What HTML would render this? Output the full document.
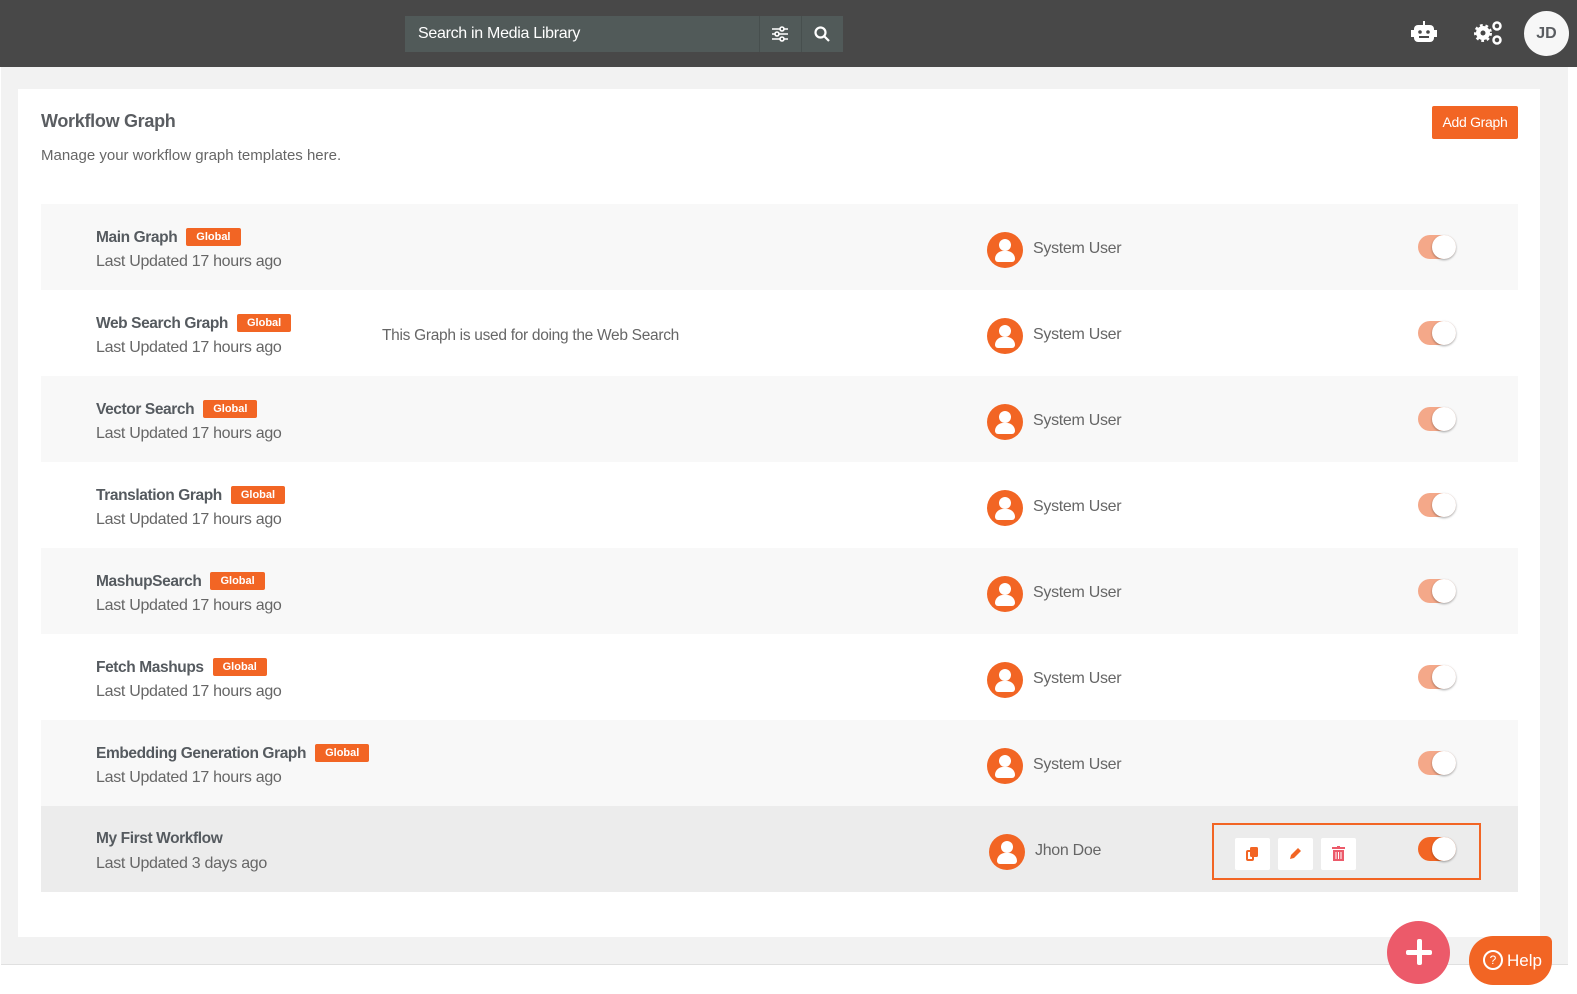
<!DOCTYPE html>
<html><head><meta charset="utf-8"><style>
*{box-sizing:border-box;margin:0;padding:0}
body{width:1577px;height:994px;background:#fff;font-family:"Liberation Sans",Arial,sans-serif;color:#5f6368;position:relative;overflow:hidden}
.top{position:absolute;left:0;top:0;width:1577px;height:67px;background:#484848}
.search{position:absolute;left:405px;top:16px;width:438px;height:36px;background:#515a59}
.search span{position:absolute;left:13px;top:9px;color:#fff;font-size:16px;letter-spacing:-0.3px}
.sep{position:absolute;top:0;width:1px;height:36px;background:#474f4e}
.main{position:absolute;left:1px;top:67px;width:1567px;height:898px;background:#f2f2f2;border-bottom:1px solid #e0e0e0}
.card{position:absolute;left:18px;top:89px;width:1522px;height:848px;background:#fff}
h1{position:absolute;left:41px;top:111px;font-size:18px;font-weight:bold;color:#5a5d61;letter-spacing:-0.3px}
.sub{position:absolute;left:41px;top:147px;font-size:15px;color:#666}
.add{position:absolute;left:1432px;top:106px;width:86px;height:33px;background:#f26524;color:#fff;font-size:14px;text-align:center;line-height:33px;border-radius:2px;letter-spacing:-0.3px}
.row{position:absolute;left:41px;width:1477px;height:86px}
.name{position:absolute;left:55px;top:24px;font-size:15.5px;font-weight:bold;color:#555a5f;letter-spacing:-0.4px}
.badge{display:inline-block;background:#f26524;color:#fff;font-size:11px;font-weight:bold;padding:3px 10px;border-radius:2px;margin-left:9px;vertical-align:2px;letter-spacing:0}
.upd{position:absolute;left:55px;top:49px;font-size:16px;color:#666;letter-spacing:-0.3px}
.desc{position:absolute;left:341px;top:37px;font-size:15.5px;color:#666;letter-spacing:-0.3px}
.av{position:absolute;left:946px;top:28px;width:36px;height:36px;border-radius:50%;background:#f26524;overflow:hidden}
.av::before{content:"";position:absolute;left:12px;top:7px;width:12px;height:12px;border-radius:50%;background:#fff}
.av::after{content:"";position:absolute;left:8px;top:19px;width:20px;height:11px;border-radius:8px 8px 3px 3px;background:#fff}
.user{position:absolute;left:992px;top:36px;font-size:16px;color:#666;letter-spacing:-0.3px}
.tog{position:absolute;left:1377px;top:31px;width:38px;height:24px;border-radius:12px;background:#f4a889}
.tog::after{content:"";position:absolute;right:0;top:0;width:24px;height:24px;border-radius:50%;background:#fff;box-shadow:0 1px 2px rgba(0,0,0,.35)}
.ib{position:absolute;top:13px;width:35px;height:32px;background:#fff;border-radius:2px}
</style></head><body>
<div class="top">
 <div class="search"><span>Search in Media Library</span>
  <div class="sep" style="left:354px"></div><div class="sep" style="left:396px"></div>
  <svg style="position:absolute;left:366px;top:9px" width="18" height="18" viewBox="0 0 18 18" fill="none" stroke="#fff" stroke-width="1.6"><path d="M1 4h16M1 9h16M1 14h16"/><circle cx="11" cy="4" r="2" fill="#515a59"/><circle cx="6" cy="9" r="2" fill="#515a59"/><circle cx="11" cy="14" r="2" fill="#515a59"/></svg>
  <svg style="position:absolute;left:408px;top:9px" width="18" height="18" viewBox="0 0 18 18" fill="none" stroke="#fff" stroke-width="2.2"><circle cx="7.5" cy="7.5" r="5"/><path d="M11 11l5 5"/></svg>
 </div>
 <svg style="position:absolute;left:1410px;top:20px" width="28" height="24" viewBox="0 0 28 24"><rect x="13" y="1" width="2" height="4" fill="#fff"/><rect x="4" y="5" width="20" height="17" rx="4" fill="#fff"/><rect x="1" y="10" width="3" height="7" fill="#fff"/><rect x="24" y="10" width="3" height="7" fill="#fff"/><circle cx="10" cy="12" r="1.8" fill="#484848"/><circle cx="18" cy="12" r="1.8" fill="#484848"/><rect x="9" y="16" width="10" height="2" fill="#484848"/></svg>
 <svg style="position:absolute;left:1473px;top:20px" width="30" height="26" viewBox="0 0 30 26"><circle cx="10" cy="13" r="7" fill="#fff" stroke="#fff" stroke-width="4" stroke-dasharray="2.5 2.5"/><circle cx="10" cy="13" r="2.5" fill="#484848"/><circle cx="24" cy="6" r="3.5" fill="none" stroke="#fff" stroke-width="2.5"/><circle cx="24" cy="20" r="3.5" fill="none" stroke="#fff" stroke-width="2.5"/></svg>
 <div style="position:absolute;left:1524px;top:11px;width:45px;height:45px;border-radius:50%;background:#f7f7f7;color:#5a5d61;font-weight:bold;font-size:16px;text-align:center;line-height:45px">JD</div>
</div>
<div class="main"></div>
<div class="card"></div>
<h1>Workflow Graph</h1>
<div class="sub">Manage your workflow graph templates here.</div>
<div class="add">Add Graph</div>

<div class="row" style="top:204px;background:#f8f8f8"><div class="name">Main Graph<span class="badge">Global</span></div><div class="upd">Last Updated 17 hours ago</div><div class="av"></div><div class="user">System User</div><div class="tog"></div></div>
<div class="row" style="top:290px"><div class="name">Web Search Graph<span class="badge">Global</span></div><div class="upd">Last Updated 17 hours ago</div><div class="desc">This Graph is used for doing the Web Search</div><div class="av"></div><div class="user">System User</div><div class="tog"></div></div>
<div class="row" style="top:376px;background:#f8f8f8"><div class="name">Vector Search<span class="badge">Global</span></div><div class="upd">Last Updated 17 hours ago</div><div class="av"></div><div class="user">System User</div><div class="tog"></div></div>
<div class="row" style="top:462px"><div class="name">Translation Graph<span class="badge">Global</span></div><div class="upd">Last Updated 17 hours ago</div><div class="av"></div><div class="user">System User</div><div class="tog"></div></div>
<div class="row" style="top:548px;background:#f8f8f8"><div class="name">MashupSearch<span class="badge">Global</span></div><div class="upd">Last Updated 17 hours ago</div><div class="av"></div><div class="user">System User</div><div class="tog"></div></div>
<div class="row" style="top:634px"><div class="name">Fetch Mashups<span class="badge">Global</span></div><div class="upd">Last Updated 17 hours ago</div><div class="av"></div><div class="user">System User</div><div class="tog"></div></div>
<div class="row" style="top:720px;background:#f8f8f8"><div class="name">Embedding Generation Graph<span class="badge">Global</span></div><div class="upd">Last Updated 17 hours ago</div><div class="av"></div><div class="user">System User</div><div class="tog"></div></div>
<div class="row" style="top:806px;background:#ececec"><div class="name">My First Workflow</div><div class="upd" style="top:49px">Last Updated 3 days ago</div><div class="av" style="left:948px;top:28px"></div><div class="user" style="left:994px;top:36px">Jhon Doe</div>
 <div style="position:absolute;left:1171px;top:17px;width:269px;height:57px;border:2px solid #f26524">
  <div class="ib" style="left:21px"><svg style="position:absolute;left:11px;top:9px" width="13" height="14" viewBox="0 0 13 14"><rect x="1" y="4" width="6" height="9" rx="1" fill="none" stroke="#f26524" stroke-width="2"/><rect x="4" y="0" width="8" height="10" rx="1.5" fill="#f26524"/></svg></div>
  <div class="ib" style="left:64px"><svg style="position:absolute;left:10px;top:8px" width="15" height="15" viewBox="0 0 15 15"><path d="M2 13l1-4 7-7 3 3-7 7z" fill="#f26524"/></svg></div>
  <div class="ib" style="left:107px"><svg style="position:absolute;left:11px;top:8px" width="13" height="15" viewBox="0 0 13 15"><rect x="0" y="1" width="13" height="2" fill="#ec5a6a"/><rect x="5" y="0" width="3" height="2" fill="#ec5a6a"/><path d="M1 4h11v11H1z" fill="#ec5a6a"/><path d="M4 6v7M6.5 6v7M9 6v7" stroke="#fff" stroke-width="1"/></svg></div>
  <div class="tog" style="left:204px;top:12px;background:#f26524"></div>
 </div>
</div>

<div style="position:absolute;left:1387px;top:921px;width:63px;height:63px;border-radius:50%;background:#ec5a6a"><div style="position:absolute;left:19px;top:29px;width:26px;height:5px;background:#fff;border-radius:2px"></div><div style="position:absolute;left:29.5px;top:18px;width:5px;height:26px;background:#fff;border-radius:2px"></div></div>
<div style="position:absolute;left:1469px;top:936px;width:83px;height:49px;background:#f26524;border-radius:24px 6px 24px 24px;color:#fff;font-size:17px;line-height:49px;padding-left:38px">Help
 <div style="position:absolute;left:14px;top:14px;width:20px;height:20px;border:2px solid #fff;border-radius:50%;font-size:12px;line-height:16px;text-align:center">?</div></div>
</body></html>
